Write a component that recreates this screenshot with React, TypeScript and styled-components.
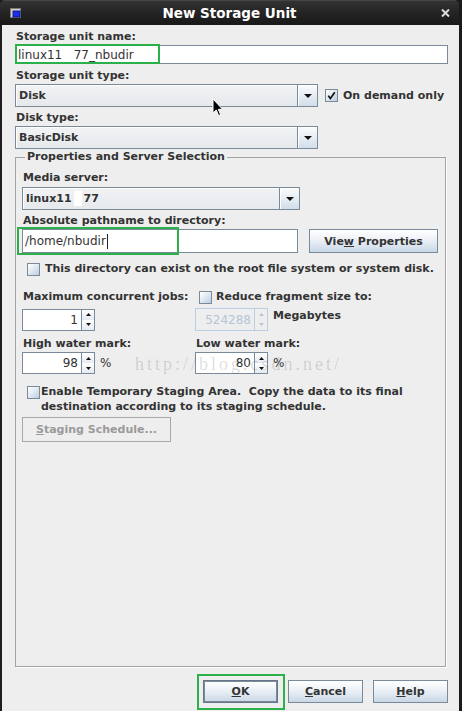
import React from 'react';
import styled, { createGlobalStyle } from 'styled-components';

const sans = `"DejaVu Sans", Verdana, sans-serif`;

const GlobalStyle = createGlobalStyle`
  html, body { margin: 0; padding: 0; background: #1b1b1b; }
  body { width: 462px; height: 711px; overflow: hidden; }
  #root { width: 462px; height: 711px; }
`;

const Window = styled.div`
  position: relative;
  width: 459px;
  height: 711px;
  display: flex;
  flex-direction: column;
  font-family: ${sans};
  color: #333;
`;

const TitleBar = styled.div`
  flex: none;
  height: 25px;
  box-sizing: border-box;
  border-radius: 5px 5px 0 0;
  background: linear-gradient(#555 0, #333 1px, #262626 45%, #181818 100%);
  display: grid;
  grid-template-columns: 20px 1fr 20px;
  align-items: center;
  padding: 0 9px 0 10px;
`;

const Title = styled.div`
  text-align: center;
  font: bold 13.5px ${sans};
  color: #ffffff;
  padding-right: 1px;
`;

const Body = styled.div`
  flex: 1;
  background: #eeeeee;
  border-left: 2px solid #1e1e1e;
  padding: 5px 11px 0 13px;
  display: flex;
  flex-direction: column;
  min-height: 0;
`;

const Label = styled.div<{ $mt?: number }>`
  font: bold 11px ${sans};
  line-height: 14px;
  height: 14px;
  margin-top: ${p => p.$mt ?? 0}px;
  padding-left: 1px;
  white-space: nowrap;
`;

const FieldWrap = styled.div<{ $mt?: number }>`
  position: relative;
  margin-top: ${p => p.$mt ?? 0}px;
  display: flex;
`;

const TextField = styled.div<{ $h: number; $w?: number }>`
  height: ${p => p.$h}px;
  width: ${p => (p.$w ? `${p.$w}px` : '100%')};
  box-sizing: border-box;
  background: #ffffff;
  border: 1px solid #7a8a99;
  font: 12px ${sans};
  color: #333;
  display: flex;
  align-items: center;
  padding: 0 2px;
  white-space: pre;
`;

const Caret = styled.span`
  display: inline-block;
  width: 1px;
  height: 15px;
  background: #222;
  margin-left: 1px;
`;

const Highlight = styled.div<{ $l: number; $t: number; $w: number; $h: number }>`
  position: absolute;
  left: ${p => p.$l}px;
  top: ${p => p.$t}px;
  width: ${p => p.$w}px;
  height: ${p => p.$h}px;
  box-sizing: border-box;
  border: 2px solid #2bb04a;
  pointer-events: none;
`;

const Row = styled.div<{ $mt?: number; $gap?: number }>`
  display: flex;
  align-items: center;
  gap: ${p => p.$gap ?? 0}px;
  margin-top: ${p => p.$mt ?? 0}px;
`;

const ComboBox = styled.div<{ $w: number }>`
  width: ${p => p.$w}px;
  height: 23px;
  flex: none;
  box-sizing: border-box;
  border: 1px solid #7a8a99;
  display: flex;
  background: linear-gradient(#f1f3f5, #e6e9ec);
`;

const ComboText = styled.div`
  flex: 1;
  display: flex;
  align-items: center;
  padding-left: 3px;
  font: bold 11px ${sans};
  box-shadow: inset 1px 1px 0 #ffffff;
  white-space: nowrap;
`;

const Blank = styled.span`
  display: inline-block;
  width: 8px;
  height: 15px;
  background: #ffffff;
  margin: 0 2px;
`;

const ComboArrow = styled.div`
  width: 19px;
  flex: none;
  border-left: 1px solid #7a8a99;
  background: linear-gradient(#fafcfd 0%, #e6edf4 50%, #d1deea 100%);
  box-shadow: inset 1px 1px 0 #ffffff;
  display: flex;
  align-items: center;
  justify-content: center;
`;

const CheckBox = styled.span<{ $mt?: number }>`
  width: 13px;
  height: 13px;
  flex: none;
  box-sizing: border-box;
  margin-top: ${p => p.$mt ?? 0}px;
  border: 1px solid #7a8a99;
  background: linear-gradient(135deg, #ffffff 0%, #e3ebf3 45%, #bccde0 100%);
  display: inline-flex;
  align-items: center;
  justify-content: center;
`;

const CheckText = styled.span`
  font: bold 11px ${sans};
  line-height: 14px;
  white-space: pre;
`;

const Group = styled.fieldset`
  flex: 1;
  margin: 1px 2px 0 0;
  padding: 7px 0 0 6px;
  border: 1px solid #a3a3a3;
  box-shadow: 1px 1px 0 #ffffff;
  min-inline-size: 0;
  display: flex;
  flex-direction: column;
`;

const Legend = styled.legend`
  font: bold 11px ${sans};
  line-height: 14px;
  padding: 0 2px;
  margin-left: 3px;
`;

const Button = styled.div<{ $w: number; $h: number; $default?: boolean; $disabled?: boolean }>`
  width: ${p => p.$w}px;
  height: ${p => p.$h}px;
  flex: none;
  box-sizing: border-box;
  display: flex;
  align-items: center;
  justify-content: center;
  font: bold 11px ${sans};
  white-space: nowrap;
  color: ${p => (p.$disabled ? '#9a9a9a' : '#333')};
  border: 1px solid ${p => (p.$disabled ? '#a8a8a8' : p.$default ? '#66768a' : '#7a8a99')};
  background: ${p =>
    p.$disabled
      ? '#eeeeee'
      : 'linear-gradient(#ffffff 0%, #f3f6f9 30%, #dfe8f1 65%, #c8d7e6 100%)'};
  box-shadow: ${p => (p.$default ? 'inset 0 0 0 1px #7d8a97' : 'none')};
`;

const SplitRow = styled.div<{ $mt?: number }>`
  display: grid;
  grid-template-columns: 173px 1fr;
  align-items: center;
  margin-top: ${p => p.$mt ?? 0}px;
`;

const Cell = styled.div<{ $indent?: number }>`
  display: flex;
  align-items: center;
  gap: 5px;
  padding-left: ${p => p.$indent ?? 0}px;
`;

const Spinner = styled.div<{ $disabled?: boolean }>`
  width: 73px;
  height: 22px;
  flex: none;
  box-sizing: border-box;
  display: flex;
  border: 1px solid ${p => (p.$disabled ? '#b8cfe5' : '#7a8a99')};
  background: ${p => (p.$disabled ? '#eeeeee' : '#ffffff')};
`;

const SpinValue = styled.div<{ $disabled?: boolean }>`
  flex: 1;
  display: flex;
  align-items: center;
  justify-content: flex-end;
  padding-right: 3px;
  font: 12px ${sans};
  color: ${p => (p.$disabled ? '#b3c6d9' : '#333')};
  border-right: 1px solid ${p => (p.$disabled ? '#b8cfe5' : '#7a8a99')};
`;

const SpinButtons = styled.div`
  width: 12px;
  display: flex;
  flex-direction: column;
`;

const SpinButton = styled.div<{ $disabled?: boolean }>`
  flex: 1;
  display: flex;
  align-items: center;
  justify-content: center;
  background: ${p => (p.$disabled ? '#eeeeee' : 'linear-gradient(#ffffff, #e4ebf2)')};
`;

const Unit = styled.span`
  font: 12px ${sans};
  color: #333;
`;

const StagingText = styled.div`
  font: bold 11px ${sans};
  line-height: 15px;
  white-space: pre;
  margin-left: 1px;
`;

const ButtonBar = styled.div`
  display: flex;
  justify-content: flex-end;
  gap: 10px;
  margin: 13px 0 8px;
  padding-right: 0;
`;

const OkWrap = styled.div`
  position: relative;
  display: flex;
`;

const Watermark = styled.div`
  position: absolute;
  left: 135px;
  top: 355px;
  font: 18px "Liberation Serif", serif;
  line-height: 18px;
  letter-spacing: 3px;
  color: rgba(0, 0, 0, 0.15);
  pointer-events: none;
  white-space: nowrap;
`;

const Cursor = styled.svg`
  position: absolute;
  left: 212px;
  top: 98px;
  pointer-events: none;
`;

const Arrow = ({ light }: { light?: boolean }) => (
  <svg width="8" height="4" viewBox="0 0 8 4">
    <polygon points="0,0 8,0 4,4" fill={light ? '#b5bec8' : '#111'} />
  </svg>
);

const SpinArrow = ({ up, light }: { up?: boolean; light?: boolean }) => (
  <svg width="5" height="3" viewBox="0 0 5 3">
    <polygon points={up ? '0,3 5,3 2.5,0' : '0,0 5,0 2.5,3'} fill={light ? '#b8c4cf' : '#111'} />
  </svg>
);

const Check = ({ checked, mt }: { checked?: boolean; mt?: number }) => (
  <CheckBox $mt={mt}>
    {checked && (
      <svg width="11" height="11" viewBox="0 0 11 11">
        <path d="M2.3 5.6 L4.3 8.6 L8.8 2.2" stroke="#111" strokeWidth="1.7" fill="none" />
      </svg>
    )}
  </CheckBox>
);

const Combo = ({ w, children }: { w: number; children: React.ReactNode }) => (
  <ComboBox $w={w}>
    <ComboText>{children}</ComboText>
    <ComboArrow>
      <Arrow />
    </ComboArrow>
  </ComboBox>
);

const Spin = ({ value, disabled }: { value: string; disabled?: boolean }) => (
  <Spinner $disabled={disabled}>
    <SpinValue $disabled={disabled}>{value}</SpinValue>
    <SpinButtons>
      <SpinButton $disabled={disabled}>
        <SpinArrow up light={disabled} />
      </SpinButton>
      <SpinButton $disabled={disabled}>
        <SpinArrow light={disabled} />
      </SpinButton>
    </SpinButtons>
  </Spinner>
);

export default function App() {
  return (
    <>
      <GlobalStyle />
      <Window>
        <TitleBar>
          <svg width="11" height="10" viewBox="0 0 11 10">
            <rect x="0.5" y="0.5" width="10" height="9" fill="#cfcfcf" stroke="#7c7c7c" />
            <rect x="3" y="3" width="7" height="6" fill="#1a2ff0" stroke="#0b0b6a" strokeWidth="0.8" />
          </svg>
          <Title>New Storage Unit</Title>
          <svg width="9" height="8" viewBox="0 0 9 8" style={{ justifySelf: 'end' }}>
            <path d="M1 0.5 L8 7.5 M8 0.5 L1 7.5" stroke="#dcdcdc" strokeWidth="2" />
          </svg>
        </TitleBar>
        <Body>
          <Label>Storage unit name:</Label>
          <FieldWrap $mt={1}>
            <TextField $h={19}>{'linux11   77_nbudir'}</TextField>
            <Highlight $l={0} $t={-1} $w={145} $h={20} />
          </FieldWrap>

          <Label $mt={5}>Storage unit type:</Label>
          <Row $mt={1} $gap={0}>
            <Combo w={303}>Disk</Combo>
            <Row $gap={5} style={{ marginLeft: 7 }}>
              <Check checked />
              <CheckText>On demand only</CheckText>
            </Row>
          </Row>

          <Label $mt={4}>Disk type:</Label>
          <Row $mt={1}>
            <Combo w={303}>BasicDisk</Combo>
          </Row>

          <Group>
            <Legend>Properties and Server Selection</Legend>
            <Label>Media server:</Label>
            <Row $mt={2}>
              <Combo w={278}>
                linux11
                <Blank />
                77
              </Combo>
            </Row>

            <Label $mt={4}>Absolute pathname to directory:</Label>
            <Row $mt={1} $gap={11}>
              <FieldWrap>
                <TextField $h={24} $w={276}>
                  /home/nbudir
                  <Caret />
                </TextField>
                <Highlight $l={-5} $t={-2} $w={162} $h={28} />
              </FieldWrap>
              <Button $w={129} $h={24}>
                Vie<u>w</u>&nbsp;Properties
              </Button>
            </Row>

            <Row $mt={9} $gap={5} style={{ paddingLeft: 5 }}>
              <Check />
              <CheckText>This directory can exist on the root file system or system disk.</CheckText>
            </Row>

            <SplitRow $mt={14}>
              <Label>Maximum concurrent jobs:</Label>
              <Cell $indent={4} style={{ gap: 4 }}>
                <Check />
                <CheckText>Reduce fragment size to:</CheckText>
              </Cell>
            </SplitRow>
            <SplitRow $mt={4}>
              <Cell>
                <Spin value="1" />
              </Cell>
              <Cell style={{ alignItems: 'flex-start' }}>
                <Spinner $disabled style={{ height: 23 }}>
                  <SpinValue $disabled>524288</SpinValue>
                  <SpinButtons>
                    <SpinButton $disabled>
                      <SpinArrow up light />
                    </SpinButton>
                    <SpinButton $disabled>
                      <SpinArrow light />
                    </SpinButton>
                  </SpinButtons>
                </Spinner>
                <CheckText style={{ marginTop: 1 }}>Megabytes</CheckText>
              </Cell>
            </SplitRow>
            <SplitRow $mt={6}>
              <Label>High water mark:</Label>
              <Label>Low water mark:</Label>
            </SplitRow>
            <SplitRow $mt={1}>
              <Cell>
                <Spin value="98" />
                <Unit>%</Unit>
              </Cell>
              <Cell>
                <Spin value="80" />
                <Unit>%</Unit>
              </Cell>
            </SplitRow>

            <Row $mt={10} style={{ paddingLeft: 5, alignItems: 'flex-start' }}>
              <Check mt={2} />
              <StagingText>
                {'Enable Temporary Staging Area.  Copy the data to its final'}
                <br />
                {'destination according to its staging schedule.'}
              </StagingText>
            </Row>
            <Row $mt={3}>
              <Button $w={149} $h={25} $disabled>
                <u>S</u>taging Schedule...
              </Button>
            </Row>
          </Group>

          <ButtonBar>
            <OkWrap>
              <Button $w={75} $h={23} $default>
                <u>O</u>K
              </Button>
              <Highlight $l={-6} $t={-6} $w={88} $h={36} />
            </OkWrap>
            <Button $w={75} $h={23}>
              <u>C</u>ancel
            </Button>
            <Button $w={75} $h={23}>
              <u>H</u>elp
            </Button>
          </ButtonBar>
        </Body>

        <Watermark>http://blog.csdn.net/</Watermark>
        <Cursor width="12" height="19" viewBox="0 0 12 19">
          <path d="M1 1 L1 15 L4.3 12 L6.6 17.5 L8.6 16.7 L6.3 11.3 L10.6 11.3 Z" fill="#000" stroke="#fff" strokeWidth="1" />
        </Cursor>
      </Window>
    </>
  );
}
